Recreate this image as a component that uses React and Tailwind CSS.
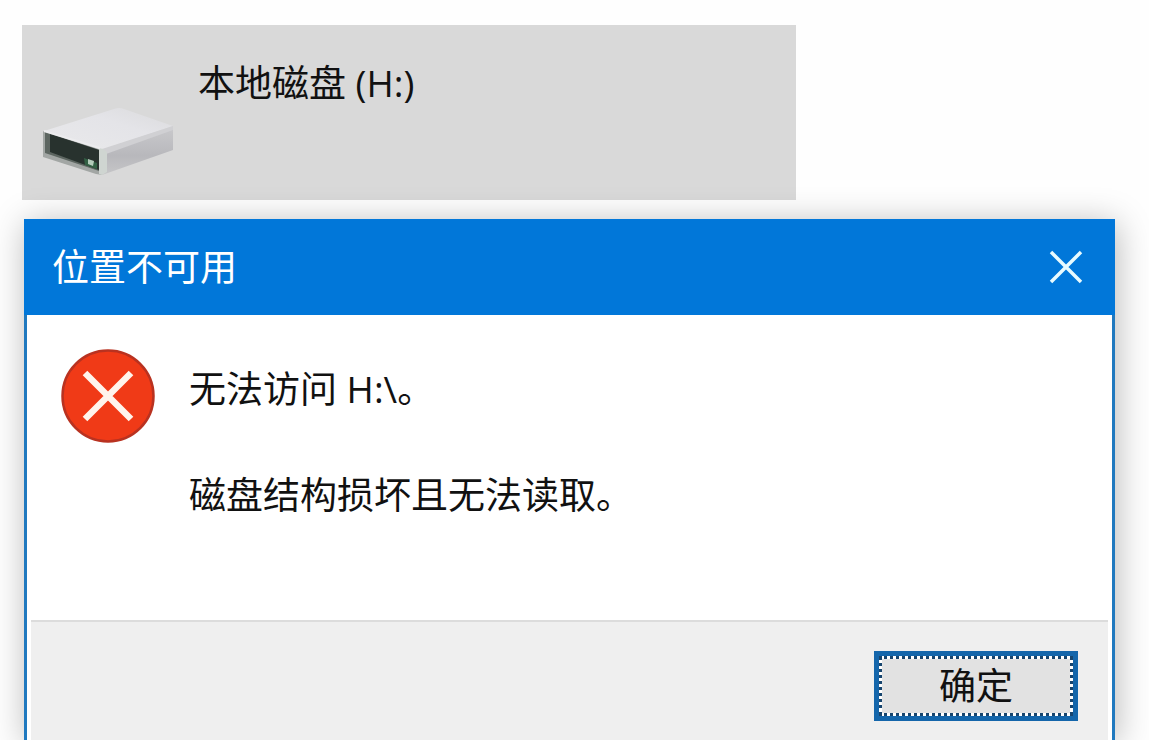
import React, { useState } from "react";

const lines = ["无法访问 H:\\。", "磁盘结构损坏且无法读取。"];

function DriveIcon() {
  return (
    <svg viewBox="0 0 134 72" className="h-[72px] w-[134px]" aria-hidden="true">
      <defs>
        <linearGradient id="driveTop" x1="0" y1="1" x2="1" y2="0">
          <stop offset="0" stopColor="#e9e9eb" />
          <stop offset="0.6" stopColor="#e4e4e8" />
          <stop offset="1" stopColor="#dadadc" />
        </linearGradient>
        <linearGradient id="driveSide" x1="0" y1="0" x2="0" y2="1">
          <stop offset="0" stopColor="#c9c9cc" />
          <stop offset="0.6" stopColor="#b8b8bc" />
          <stop offset="1" stopColor="#c6c6c8" />
        </linearGradient>
      </defs>
      <path d="M2 26 L72 4 Q77 2 82 4 L131 21 L60 45 Z" fill="url(#driveTop)" />
      <path d="M60 45 L131 22 L131 45 L60 70 Z" fill="url(#driveSide)" />
      <path d="M60 44 L131 21 L131 25 L64 49 Z" fill="#d0d0d3" />
      <path d="M1 26 L60 45 L60 70 L54 69 L1 52 Z" fill="#a2a6a4" />
      <path d="M3 27 L57 45 L57 66 L3 48 Z" fill="#5d6661" />
      <path d="M8 29 L57 45 L57 65 L8 47 Z" fill="#28322e" />
      <path d="M57 43 L61 44 L65 47 L65 67 L60 70 L57 69 Z" fill="#cfd5d1" />
      <path d="M2 26 L58 43" stroke="#ececee" strokeWidth="2" />
      <path d="M42 53 L55 58 L55 64 L43 60 Z" fill="#326044" />
      <path d="M46 54 L52 56 L51 61 L46 59 Z" fill="#b4ccbb" />
    </svg>
  );
}

function ErrorIcon() {
  return (
    <svg viewBox="0 0 94 94" className="size-[94px] shrink-0" aria-hidden="true">
      <circle cx="47" cy="47" r="45.5" fill="#f03a17" stroke="#b93220" strokeWidth="2.5" />
      <path d="M24 24 L70 70 M70 24 L24 70" stroke="#fff4ec" strokeWidth="6.5" />
    </svg>
  );
}

function App() {
  const [open, setOpen] = useState(true);

  return (
    <div className="flex h-screen flex-col overflow-hidden bg-[#fefefe] pt-[25px] font-['Open_Sans','Noto_Sans_CJK_SC',sans-serif] text-[37px] leading-[48px] text-[#111]">
      <div className="mx-[22px] flex h-[175px] max-w-[774px] shrink-0 items-start bg-[#d9d9d9] pl-5">
        <div className="pt-20">
          <DriveIcon />
        </div>
        <span className="pt-[34px] pl-[22px]">本地磁盘 (H:)</span>
      </div>

      {open && (
        <div
          role="dialog"
          aria-labelledby="title"
          className="mt-[19px] mr-[34px] ml-6 flex flex-1 flex-col border-x-[3px] border-[#2079bf] bg-white shadow-[2px_4px_32px_rgba(0,0,0,0.28)]"
        >
          <div className="-mx-[3px] flex h-24 shrink-0 items-center justify-between bg-[#0177d9] pr-8 pl-7 text-white">
            <h1 id="title">位置不可用</h1>
            <button type="button" aria-label="关闭" onClick={() => setOpen(false)}>
              <svg viewBox="0 0 34 34" className="size-[34px]">
                <path d="M2 2 L32 32 M32 2 L2 32" stroke="#e8fbff" strokeWidth="3.5" />
              </svg>
            </button>
          </div>

          <div className="flex h-[305px] shrink-0 gap-[34px] pt-[34px] pl-[34px]">
            <ErrorIcon />
            <div className="flex flex-col gap-[58px] pt-4">
              {lines.map((line) => (
                <p key={line}>{line}</p>
              ))}
            </div>
          </div>

          <div className="mx-1 flex flex-1 items-start justify-end border-t-2 border-[#dcdcdc] bg-[#efefef] pt-[29px] pr-[30px]">
            <button
              type="button"
              onClick={() => setOpen(false)}
              className="h-[70px] w-[204px] border-[5px] border-[#1466ab]"
            >
              <span className="block h-full border-[3px] border-dotted border-[#17456e] bg-white">
                <span className="flex h-full items-center justify-center bg-[#e2e2e2]">
                  确定
                </span>
              </span>
            </button>
          </div>
        </div>
      )}
    </div>
  );
}

export default App;
